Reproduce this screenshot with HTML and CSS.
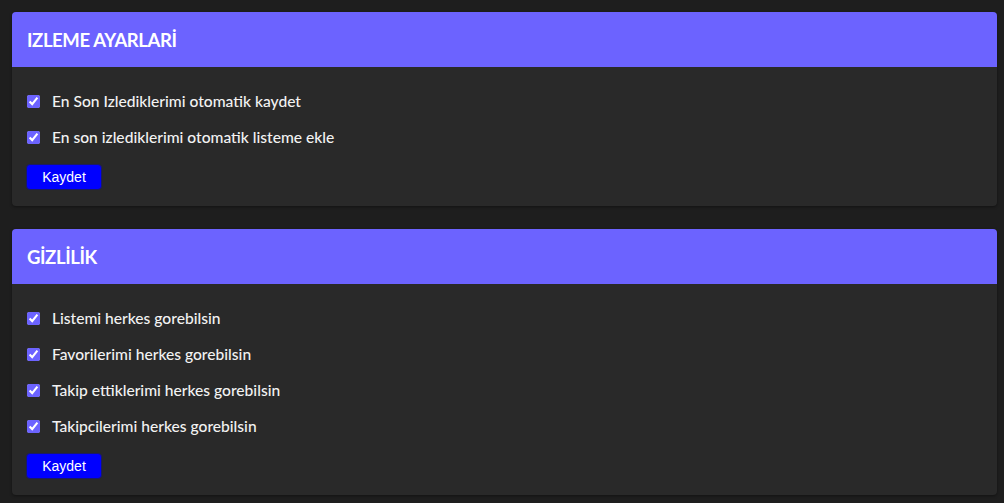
FILE: index.html
```html
<!DOCTYPE html>
<html lang="tr">
<head>
<meta charset="utf-8">
<link rel="stylesheet" href="styles.css">
</head>
<body>
<div class="page">
  <section class="card">
    <div class="card-head"><h2>IZLEME AYARLARİ</h2></div>
    <div class="card-body">
      <label class="row"><input type="checkbox" checked><span>En Son Izlediklerimi otomatik kaydet</span></label>
      <label class="row"><input type="checkbox" checked><span>En son izlediklerimi otomatik listeme ekle</span></label>
      <button class="btn">Kaydet</button>
    </div>
  </section>
  <section class="card">
    <div class="card-head"><h2>GİZLİLİK</h2></div>
    <div class="card-body">
      <label class="row"><input type="checkbox" checked><span>Listemi herkes gorebilsin</span></label>
      <label class="row"><input type="checkbox" checked><span>Favorilerimi herkes gorebilsin</span></label>
      <label class="row"><input type="checkbox" checked><span>Takip ettiklerimi herkes gorebilsin</span></label>
      <label class="row"><input type="checkbox" checked><span>Takipcilerimi herkes gorebilsin</span></label>
      <button class="btn">Kaydet</button>
    </div>
  </section>
</div>
</body>
</html>
```
FILE: styles.css
```css
html, body {
  margin: 0;
  padding: 0;
  background: #1e1e1e;
  height: 100%;
}
body {
  font-family: Lato, "Open Sans", sans-serif;
  color: #f2f2f2;
}
.page {
  padding: 12px 7px 12px 12px;
  display: flex;
  flex-direction: column;
  gap: 23px;
}
.card {
  background: #292929;
  border-radius: 4px;
  overflow: hidden;
  box-shadow: 0 1px 3px rgba(0,0,0,0.4);
}
.card-head {
  background: #6c63ff;
  height: 55px;
  display: flex;
  align-items: center;
  padding: 0 15px;
}
.card-head h2 {
  margin: 0;
  font-size: 18.5px;
  font-weight: 700;
  color: #ffffff;
  letter-spacing: -0.4px;
}
.card-body {
  padding: 16px 14px 16px 14px;
  display: flex;
  flex-direction: column;
  align-items: flex-start;
}
.row {
  height: 36px;
  display: flex;
  align-items: center;
  gap: 12px;
  font-size: 15.6px;
  font-weight: 500;
}
.row input {
  margin: 0 0 0 1px;
  width: 13px;
  height: 13px;
  accent-color: #6c63ff;
}
.btn {
  margin-top: 9px;
  width: 76px;
  height: 26px;
  background: #0000ff;
  color: #ffffff;
  border: 1px solid #1a1a66;
  border-radius: 4px;
  font-family: "Liberation Sans", Arial, sans-serif;
  font-size: 14px;
  padding: 0;
}
```
